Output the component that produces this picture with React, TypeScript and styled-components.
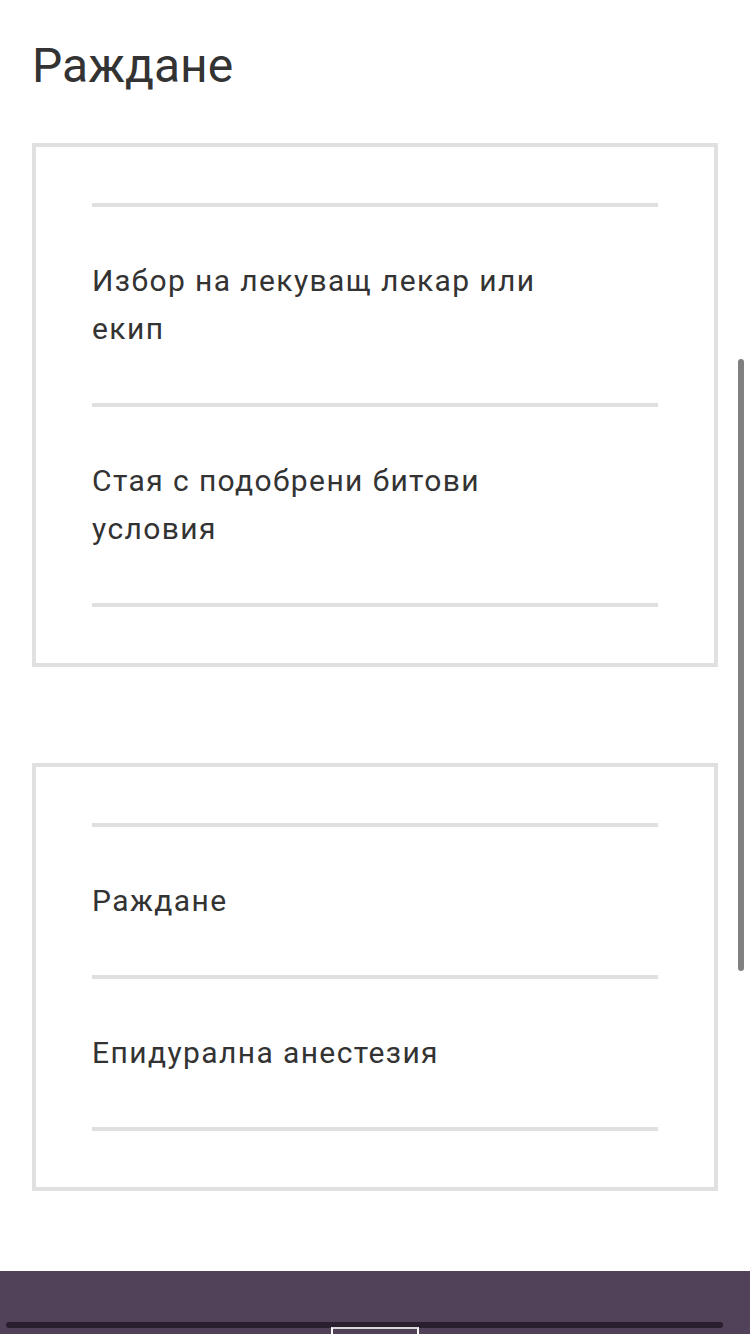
import React from "react";
import styled, { createGlobalStyle } from "styled-components";

const GlobalStyle = createGlobalStyle`
  html, body {
    margin: 0;
    padding: 0;
    background: #ffffff;
    overflow: hidden;
  }
  body {
    font-family: Roboto, "Noto Sans", "DejaVu Sans", sans-serif;
    color: #333333;
  }
  * { box-sizing: border-box; }
`;

const Screen = styled.div`
  position: relative;
  width: 750px;
  height: 1334px;
  display: flex;
  flex-direction: column;
  overflow: hidden;
`;

const Content = styled.main`
  flex: 1;
  padding: 38px 32px 0;
  display: flex;
  flex-direction: column;
`;

const Title = styled.h1`
  margin: 0 0 49px;
  font-size: 48px;
  line-height: 56px;
  font-weight: 400;
  color: #333333;
`;

const Cards = styled.div`
  display: flex;
  flex-direction: column;
  gap: 96px;
`;

const Card = styled.section`
  border: 4px solid #e0e0e0;
  padding: 56px;
`;

const List = styled.ul`
  list-style: none;
  margin: 0;
  padding: 0;
  border-bottom: 4px solid #e0e0e0;
`;

const Row = styled.li`
  border-top: 4px solid #e0e0e0;
  padding: 50px 0;
  display: flex;
  align-items: center;
`;

const RowText = styled.span`
  max-width: 480px;
  font-size: 30px;
  line-height: 48px;
  letter-spacing: 1.4px;
  color: #333333;
`;

const Footer = styled.footer`
  position: relative;
  height: 63px;
  flex: none;
  background: #514159;
`;

const HScroll = styled.div`
  position: absolute;
  left: 6px;
  right: 27px;
  top: 51px;
  height: 6px;
  border-radius: 3px;
  background: #2a1f2e;
`;

const Tab = styled.div`
  position: absolute;
  left: 331px;
  top: 56px;
  width: 88px;
  height: 20px;
  border: 2px solid #ffffff;
  border-top-color: #d8d8d8;
`;

const VScroll = styled.div`
  position: absolute;
  right: 6px;
  top: 359px;
  width: 6px;
  height: 612px;
  border-radius: 3px;
  background: #808080;
`;

const groups: string[][] = [
  ["Избор на лекуващ лекар или екип", "Стая с подобрени битови условия"],
  ["Раждане", "Епидурална анестезия"],
];

export default function App() {
  return (
    <>
      <GlobalStyle />
      <Screen>
        <Content>
          <Title>Раждане</Title>
          <Cards>
            {groups.map((items, i) => (
              <Card key={i}>
                <List>
                  {items.map((t) => (
                    <Row key={t}>
                      <RowText>{t}</RowText>
                    </Row>
                  ))}
                </List>
              </Card>
            ))}
          </Cards>
        </Content>
        <Footer>
          <HScroll />
          <Tab />
        </Footer>
        <VScroll />
      </Screen>
    </>
  );
}
